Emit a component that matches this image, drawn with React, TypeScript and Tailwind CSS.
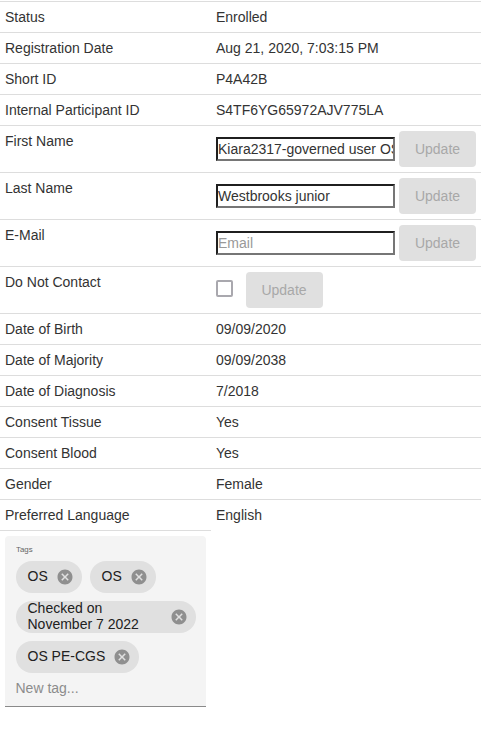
import React from "react";

function Row({ label, children, tall }: { label: string; children: React.ReactNode; tall?: boolean }) {
  return (
    <tr className={tall ? "h-[47px]" : "h-[31px]"}>
      <td className="w-[211px] border-t border-[#ddd] p-[5px] align-top">{label}</td>
      <td className="border-t border-[#ddd] p-[5px] align-top">{children}</td>
    </tr>
  );
}

function Update({ className = "" }: { className?: string }) {
  return (
    <button disabled className={`h-9 w-[77px] shrink-0 rounded bg-[#e0e0e0] text-[14px] text-[#a8a8a8] ${className}`}>
      Update
    </button>
  );
}

function Field({ value, placeholder }: { value?: string; placeholder?: string }) {
  return (
    <div className="flex items-center gap-1">
      <input
        defaultValue={value}
        placeholder={placeholder}
        className="h-6 w-[179px] shrink-0 border-2 border-t-[#1f1f1f] border-r-[#767676] border-b-[#767676] border-l-[#1f1f1f] bg-white p-0 text-[14px] text-[#333] placeholder:text-[#999]"
      />
      <Update />
    </div>
  );
}

function Chip({ children, className = "" }: { children: React.ReactNode; className?: string }) {
  return (
    <div className={`flex h-8 items-center justify-between rounded-2xl bg-[#e0e0e0] pr-2 pl-[11.5px] text-[14px] leading-4 text-[#212121] ${className}`}>
      <span className="pb-[2px]">{children}</span>
      <svg viewBox="0 0 24 24" className="h-[18px] w-[18px] shrink-0 fill-[#8f8f8f]">
        <path d="M12 2C6.47 2 2 6.47 2 12s4.47 10 10 10 10-4.47 10-10S17.53 2 12 2zm5 13.59L15.59 17 12 13.41 8.41 17 7 15.59 10.59 12 7 8.41 8.41 7 12 10.59 15.59 7 17 8.41 13.41 12 17 15.59z" />
      </svg>
    </div>
  );
}

export default function App() {
  return (
    <main className="h-[731px] w-[482px] overflow-hidden bg-white pt-px font-['Liberation_Sans',Arial,sans-serif] text-[14px] leading-5 text-[#333]">
      <table className="w-[481px] table-fixed border-separate border-spacing-0">
        <tbody>
          <Row label="Status">Enrolled</Row>
          <Row label="Registration Date">Aug 21, 2020, 7:03:15 PM</Row>
          <Row label="Short ID">P4A42B</Row>
          <Row label="Internal Participant ID">S4TF6YG65972AJV775LA</Row>
          <Row label="First Name" tall><Field value="Kiara2317-governed user OS" /></Row>
          <Row label="Last Name" tall><Field value="Westbrooks junior" /></Row>
          <Row label="E-Mail" tall><Field placeholder="Email" /></Row>
          <Row label="Do Not Contact" tall>
            <div className="flex items-center">
              <span className="mb-[3px] h-[17px] w-[17px] rounded-[2px] border-2 border-[#a9a8ae]" />
              <Update className="ml-[13px] pr-px" />
            </div>
          </Row>
          <Row label="Date of Birth">09/09/2020</Row>
          <Row label="Date of Majority">09/09/2038</Row>
          <Row label="Date of Diagnosis">7/2018</Row>
          <Row label="Consent Tissue">Yes</Row>
          <Row label="Consent Blood">Yes</Row>
          <Row label="Gender">Female</Row>
          <Row label="Preferred Language">English</Row>
          <tr>
            <td className="border-t border-[#ddd] p-[5px] align-top">
              <div className="h-[171px] rounded-t border-b border-[#8a8a8a] bg-[#f4f4f4] px-[11px] pt-2">
                <div className="h-[17px]">
                  <div className="w-fit origin-top-left scale-75 text-[10.5px] leading-[15px] text-[#666]">Tags</div>
                </div>
                <div className="flex w-[180px] flex-wrap gap-2">
                  <Chip className="w-[66px]">OS</Chip>
                  <Chip className="w-[66px]">OS</Chip>
                  <Chip className="w-[180px]">Checked on<br />November 7 2022</Chip>
                  <Chip className="w-[123px]">OS PE-CGS</Chip>
                </div>
                <input placeholder="New tag..." className="mt-[5px] -ml-[0.5px] block h-5 w-[170px] bg-transparent text-[14px] placeholder:text-[#8c8c8c]" />
              </div>
            </td>
            <td />
          </tr>
        </tbody>
      </table>
    </main>
  );
}
